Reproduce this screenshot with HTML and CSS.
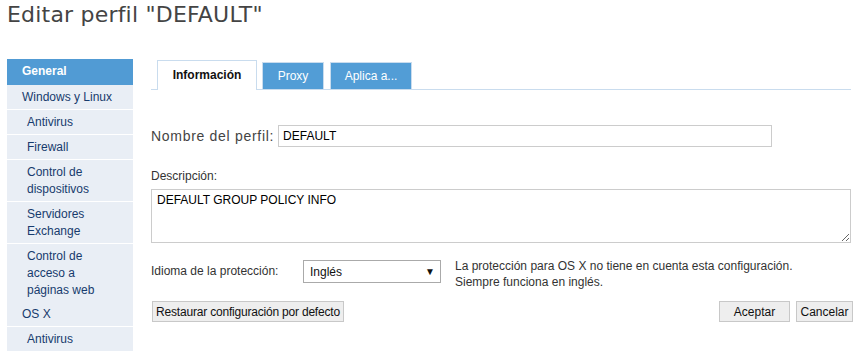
FILE: index.html
```html
<!DOCTYPE html>
<html lang="es">
<head>
<meta charset="utf-8">
<title>Editar perfil</title>
<link rel="stylesheet" href="styles.css">
</head>
<body>
<h1 class="title">Editar perfil "DEFAULT"</h1>
<div class="layout">
  <nav class="sidebar">
    <div class="item active">General</div>
    <div class="item">Windows y Linux</div>
    <div class="item sub">Antivirus</div>
    <div class="item sub">Firewall</div>
    <div class="item sub">Control de<br>dispositivos</div>
    <div class="item sub">Servidores<br>Exchange</div>
    <div class="item sub noline">Control de<br>acceso a<br>páginas web</div>
    <div class="item">OS X</div>
    <div class="item sub">Antivirus</div>
  </nav>
  <main class="content">
    <div class="tabs">
      <div class="tab current">Información</div>
      <div class="tab proxy">Proxy</div>
      <div class="tab applies">Aplica a...</div>
    </div>
    <div class="name-row">
      <label class="big-label">Nombre del perfil:</label>
      <input class="name-input" type="text" value="DEFAULT">
    </div>
    <div class="desc-label">Descripción:</div>
    <textarea class="desc">DEFAULT GROUP POLICY INFO</textarea>
    <div class="lang-row">
      <span class="lang-label">Idioma de la protección:</span>
      <div class="select"><span>Inglés</span><span class="arrow">▼</span></div>
      <div class="note">La protección para OS X no tiene en cuenta esta configuración.<br>Siempre funciona en inglés.</div>
    </div>
    <div class="actions">
      <button class="btn restore">Restaurar configuración por defecto</button>
      <div class="right">
        <button class="btn ok">Aceptar</button>
        <button class="btn cancel">Cancelar</button>
      </div>
    </div>
  </main>
</div>
</body>
</html>
```
FILE: styles.css
```css
html, body {
  margin: 0;
  padding: 0;
  background: #fff;
  font-family: "Liberation Sans", Arial, sans-serif;
  font-size: 12px;
  color: #333;
}
.title {
  margin: 0;
  padding-left: 7px;
  font-family: "DejaVu Sans", Verdana, sans-serif;
  font-weight: normal;
  font-size: 22px;
  letter-spacing: 0.2px;
  line-height: 30px;
  color: #444;
}
.layout {
  display: flex;
  margin-top: 29px;
  padding-left: 7px;
  gap: 18px;
  align-items: flex-start;
}
.sidebar {
  width: 126px;
  flex: none;
  background: #e9eef5;
}
.item {
  padding: 4px 4px 3px 15px;
  line-height: 17px;
  color: #173b6d;
  border-bottom: 1px solid #fff;
}
.item.sub { padding-left: 20px; }
.item.noline { border-bottom: none; }
.item.active {
  background: #519bd4;
  color: #fff;
  font-weight: bold;
  padding-top: 4px;
  padding-bottom: 5px;
  border-bottom: none;
}
.content {
  width: 700px;
  flex: none;
  padding-top: 1px;
}
.tabs {
  display: flex;
  align-items: flex-end;
  gap: 5px;
  padding-left: 6px;
  height: 29px;
  border-bottom: 1px solid #c9dcee;
}
.tab {
  box-sizing: border-box;
  border: 1px solid #c9dcee;
  border-bottom: none;
  text-align: center;
}
.tab.current {
  width: 100px;
  height: 30px;
  line-height: 28px;
  margin-bottom: -1px;
  background: #fff;
  font-weight: bold;
  color: #111;
}
.tab.proxy, .tab.applies {
  height: 27px;
  line-height: 27px;
  background: #529dd6;
  color: #fff;
}
.tab.proxy { width: 62px; }
.tab.applies { width: 82px; margin-left: 1px; }
.name-row {
  display: flex;
  align-items: center;
  gap: 4px;
  margin-top: 35px;
}
.big-label {
  font-size: 14px;
  letter-spacing: 0.7px;
  color: #444;
}
.name-input {
  box-sizing: border-box;
  width: 494px;
  height: 22px;
  border: 1px solid #ccc;
  padding: 0 4px;
  font-family: "Liberation Sans", Arial, sans-serif;
  font-size: 12px;
  color: #000;
  outline: none;
}
.desc-label {
  margin-top: 21px;
  line-height: 16px;
  color: #333;
}
.desc {
  display: block;
  box-sizing: border-box;
  width: 700px;
  height: 54px;
  margin: 5px 0 0;
  border: 1px solid #ccc;
  padding: 3px 5px;
  font-family: "Liberation Sans", Arial, sans-serif;
  font-size: 12px;
  color: #000;
  outline: none;
}
.lang-row {
  display: flex;
  align-items: flex-start;
  margin-top: 17px;
}
.lang-label {
  width: 152px;
  flex: none;
  line-height: 23px;
}
.select {
  box-sizing: border-box;
  width: 138px;
  height: 23px;
  border: 1px solid #aaa;
  display: flex;
  align-items: center;
  justify-content: space-between;
  padding: 0 5px 0 6px;
  color: #111;
  font-size: 12px;
  flex: none;
}
.arrow { font-size: 10px; }
.note {
  margin-left: 14px;
  margin-top: -2px;
  line-height: 16px;
  color: #333;
}
.actions {
  display: flex;
  justify-content: space-between;
  margin-top: 11px;
  margin-right: -2px;
}
.right { display: flex; gap: 6px; }
.btn {
  box-sizing: border-box;
  height: 21px;
  border: 1px solid #c8c8c8;
  background: #eeeeee;
  font-family: "Liberation Sans", Arial, sans-serif;
  font-size: 12px;
  color: #111;
  padding: 0 2px;
  margin: 0;
  white-space: nowrap;
}
.btn.restore { margin-left: 1px; width: 192px; letter-spacing: -0.2px; }
.btn.ok { width: 71px; }
.btn.cancel { width: 57px; }
```
